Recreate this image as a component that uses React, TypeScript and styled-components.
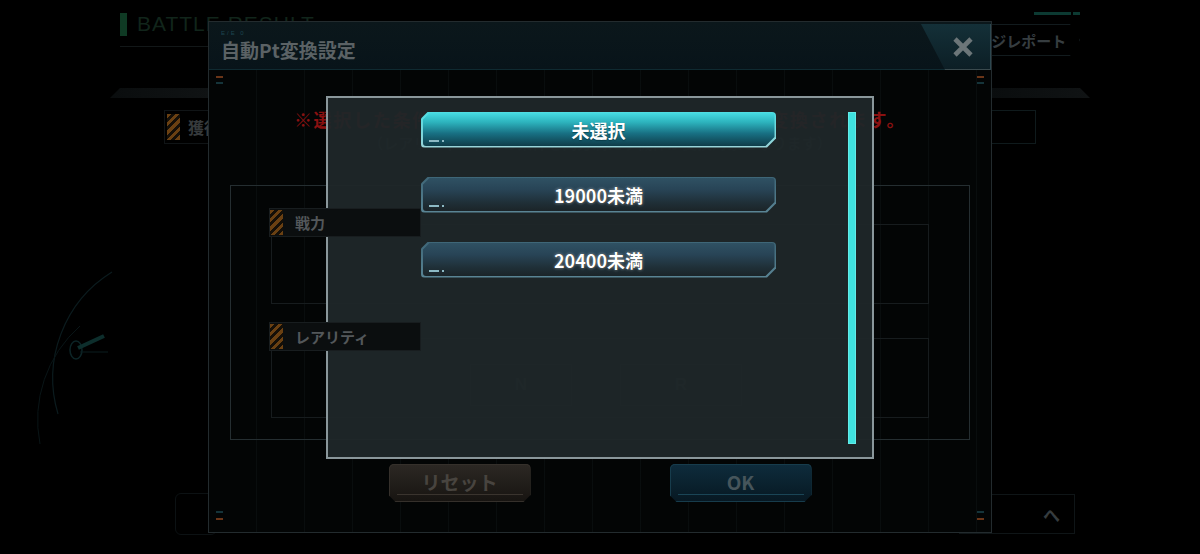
import React from 'react';
import styled, { createGlobalStyle } from 'styled-components';

const FONT = `"Noto Sans CJK JP", "Noto Sans", "Liberation Sans", sans-serif`;

const Global = createGlobalStyle`
  html, body {
    margin: 0;
    padding: 0;
    background: #000;
  }
  #root {
    width: 1200px;
    height: 554px;
  }
`;

const Stage = styled.div`
  position: relative;
  width: 1200px;
  height: 554px;
  overflow: hidden;
  background: #000;
  font-family: ${FONT};
`;

/* ---------- underlying battle result page (dimmed) ---------- */

const Page = styled.div`
  display: flex;
  flex-direction: column;
  height: 100%;
`;

const PageHeader = styled.div`
  display: flex;
  align-items: flex-start;
  height: 62px;
  padding: 12px 120px 0 120px;
  box-sizing: border-box;
`;

const TitleBlock = styled.div`
  display: flex;
  flex-direction: column;
  gap: 10px;
`;

const TitleRow = styled.div`
  display: flex;
  align-items: center;
  gap: 10px;
`;

const GreenBar = styled.div`
  width: 7px;
  height: 23px;
  background: #0f3a24;
`;

const PageTitle = styled.div`
  font-family: "Liberation Sans", sans-serif;
  font-size: 21px;
  letter-spacing: 1px;
  color: #11251b;
`;

const TitleRule = styled.div`
  width: 92px;
  height: 1px;
  background: #121718;
`;

const ReportColumn = styled.div`
  margin-left: auto;
  display: flex;
  flex-direction: column;
  align-items: flex-end;
  gap: 9px;
`;

const TealRule = styled.div`
  width: 46px;
  height: 3px;
  background: linear-gradient(90deg, #0c3a32 0 80%, transparent 80% 84%, #0c3a32 84%);
`;

const ReportButton = styled.div`
  width: 146px;
  height: 32px;
  display: flex;
  align-items: center;
  padding-left: 12px;
  box-sizing: border-box;
  font-size: 15px;
  font-weight: 700;
  color: #363d40;
  border: 1px solid #121b1e;
  clip-path: polygon(0 0, calc(100% - 10px) 0, 100% 50%, calc(100% - 10px) 100%, 0 100%);
`;

const PageBody = styled.div`
  flex: 1;
  display: grid;
  grid-template-columns: 210px 1fr 210px;
`;

const Side = styled.div<{ $right?: boolean }>`
  display: flex;
  flex-direction: column;
  align-items: ${p => (p.$right ? 'flex-start' : 'flex-end')};
  padding-top: 26px;
`;

const DecoStrip = styled.div<{ $flip?: boolean }>`
  width: 100px;
  height: 10px;
  background: linear-gradient(90deg, #0a0d0e, #101314);
  clip-path: ${p =>
    p.$flip
      ? 'polygon(0 0, 90% 0, 100% 100%, 0 100%)'
      : 'polygon(10% 0, 100% 0, 100% 100%, 0 100%)'};
`;

const SideTag = styled.div<{ $plain?: boolean }>`
  margin-top: 12px;
  display: flex;
  align-items: center;
  gap: 8px;
  width: 46px;
  height: 34px;
  padding-left: 2px;
  box-sizing: border-box;
  border: 1px solid ${p => (p.$plain ? '#0f1a1c' : '#101416')};
  border-${p => (p.$plain ? 'left' : 'right')}: none;
  font-size: 16px;
  font-weight: 700;
  color: #363a3c;
  white-space: nowrap;
`;

const Stripes = styled.div<{ $h?: number }>`
  flex: none;
  width: 13px;
  height: ${p => p.$h ?? 26}px;
  background: repeating-linear-gradient(135deg, #6a4012 0 3px, #140f08 3px 6px);
`;

const Gauge = styled.svg`
  margin-top: 120px;
  align-self: flex-start;
`;

const PageFooter = styled.div`
  display: flex;
  align-items: center;
  justify-content: space-between;
  height: 56px;
  padding: 0 125px 12px 175px;
`;

const FooterChip = styled.div`
  width: 40px;
  height: 40px;
  border: 1px solid #0c1113;
  border-radius: 6px;
`;

const NextButton = styled.div`
  width: 116px;
  height: 40px;
  display: flex;
  align-items: center;
  justify-content: flex-end;
  padding-right: 14px;
  box-sizing: border-box;
  border: 1px solid #0f1517;
  font-size: 17px;
  font-weight: 700;
  color: #363c3f;
`;

/* ---------- dialog layers ---------- */

const Layer = styled.div`
  position: absolute;
  inset: 0;
  display: flex;
  align-items: center;
  justify-content: center;
`;

const SettingsDialog = styled.div`
  position: relative;
  width: 784px;
  height: 512px;
  box-sizing: border-box;
  border: 1px solid #232b2e;
  display: flex;
  flex-direction: column;
  background:
    repeating-linear-gradient(90deg, transparent 0 47px, rgba(20, 28, 30, 0.35) 47px 48px),
    #030505;
`;

const DialogHeader = styled.div`
  display: flex;
  align-items: stretch;
  height: 47px;
  background: linear-gradient(180deg, #0b171b, #08141a);
  border-bottom: 1px solid #0f2a31;
`;

const HeaderTitle = styled.div`
  display: flex;
  flex-direction: column;
  justify-content: center;
  gap: 2px;
  padding-left: 12px;
`;

const Tiny = styled.div`
  font-family: "Liberation Sans", sans-serif;
  font-size: 6px;
  line-height: 7px;
  letter-spacing: 2px;
  color: #1c4550;
`;

const TitleText = styled.div`
  font-size: 19px;
  font-weight: 700;
  color: #5b6265;
  line-height: 22px;
`;

const CloseButton = styled.button`
  margin-left: auto;
  margin-top: 2px;
  width: 70px;
  height: 46px;
  border: none;
  padding: 0 0 0 14px;
  display: flex;
  align-items: center;
  justify-content: center;
  background: linear-gradient(180deg, #143038, #0c1e25);
  clip-path: polygon(0 0, 100% 0, 100% 100%, 24px 100%);
  box-shadow: inset -1px 0 0 #2d474f, inset 0 -1px 0 #3a4a4e;
`;

const DialogBody = styled.div`
  flex: 1;
  display: flex;
  flex-direction: column;
  align-items: center;
  padding: 37px 21px 0;
`;

const Notice = styled.div`
  font-size: 18px;
  font-weight: 700;
  letter-spacing: 1.7px;
  line-height: 24px;
  color: #8a1111;
  white-space: nowrap;
`;

const SubNotice = styled.div`
  font-size: 15px;
  font-weight: 700;
  line-height: 24px;
  color: #252b2d;
  white-space: nowrap;
`;

const FilterBox = styled.div`
  align-self: stretch;
  margin-top: 30px;
  height: 255px;
  box-sizing: border-box;
  border: 1px solid #252e31;
  padding: 22px 40px 0 38px;
  display: flex;
  flex-direction: column;
  gap: 18px;
`;

const FilterGroup = styled.div`
  display: flex;
  flex-direction: column;
`;

const GroupTag = styled.div`
  position: relative;
  z-index: 1;
  display: flex;
  align-items: center;
  gap: 12px;
  width: 150px;
  height: 27px;
  margin-bottom: -13px;
  background: #0b0e0f;
  border: 1px solid #181d1f;
  font-size: 15px;
  font-weight: 700;
  color: #53575a;
`;

const GroupBox = styled.div`
  height: 80px;
  margin-left: 2px;
  border: 1px solid #171c1e;
  display: flex;
  align-items: center;
  gap: 48px;
  padding: 14px 0 0 198px;
  box-sizing: border-box;
`;

const RarityChip = styled.div<{ $w: number }>`
  width: ${p => p.$w}px;
  height: 40px;
  border: 1px solid #1b2123;
  display: flex;
  align-items: center;
  justify-content: center;
  font-family: "Liberation Sans", sans-serif;
  font-size: 17px;
  font-weight: 700;
  color: #2a3032;
`;

const ButtonRow = styled.div`
  display: flex;
  gap: 139px;
  margin-top: 24px;
`;

const FooterButton = styled.button<{ $tone: 'brown' | 'blue' }>`
  position: relative;
  width: 142px;
  height: 38px;
  border: none;
  padding: 0 0 4px;
  font-family: ${FONT};
  font-size: 19px;
  font-weight: 700;
  border-radius: 5px 5px 0 0;
  clip-path: polygon(0 0, 100% 0, 100% calc(100% - 7px), calc(100% - 7px) 100%, 7px 100%, 0 calc(100% - 7px));
  color: ${p => (p.$tone === 'brown' ? '#48443f' : '#46555b')};
  background: ${p =>
    p.$tone === 'brown'
      ? 'linear-gradient(180deg, #2c2824, #171411)'
      : 'linear-gradient(180deg, #0e2c3c, #071822)'};
  box-shadow: inset 0 0 0 1px ${p => (p.$tone === 'brown' ? '#35302b' : '#173c4c')};

  &::after {
    content: '';
    position: absolute;
    left: 8px;
    right: 8px;
    bottom: 7px;
    height: 1px;
    background: ${p => (p.$tone === 'brown' ? '#3a342e' : '#1a4556')};
  }
`;

const Marker = styled.div<{ $x: 'left' | 'right'; $y: number; $c: string }>`
  position: absolute;
  ${p => p.$x}: 7px;
  top: ${p => p.$y}px;
  width: 7px;
  height: 2px;
  background: ${p => p.$c};
`;

/* ---------- selection popup ---------- */

const Picker = styled.div`
  width: 548px;
  height: 363px;
  box-sizing: border-box;
  border: 2px solid #8a979b;
  background: rgba(31, 39, 41, 0.95);
  display: flex;
  padding: 14px 16px 0 93px;
`;

const OptionList = styled.div`
  display: flex;
  flex-direction: column;
  gap: 29px;
`;

const CHAMFER = `polygon(7px 0, 100% 0, 100% calc(100% - 9px), calc(100% - 9px) 100%, 0 100%, 0 7px)`;

const OptionFrame = styled.button<{ $active?: boolean }>`
  width: 355px;
  height: 36px;
  padding: 1.5px;
  border: none;
  border-radius: 4px;
  clip-path: ${CHAMFER};
  background: ${p =>
    p.$active
      ? 'linear-gradient(180deg, #4fdde2, #9ad3d8)'
      : 'linear-gradient(180deg, #3e6677, #5a8595)'};
  cursor: pointer;
`;

const OptionFace = styled.span<{ $active?: boolean }>`
  position: relative;
  display: flex;
  align-items: center;
  justify-content: center;
  width: 100%;
  height: 100%;
  border-radius: 3px;
  clip-path: ${CHAMFER};
  font-family: ${FONT};
  font-size: 18px;
  font-weight: 700;
  color: #fff;
  background: ${p =>
    p.$active
      ? 'linear-gradient(180deg, #46dbe1 0%, #2db3bd 28%, #187083 62%, #0f3c49 100%)'
      : 'linear-gradient(180deg, #2f5163 0%, #284456 35%, #1f2f37 75%, #1b2428 100%)'};
  text-shadow: ${p =>
    p.$active
      ? '0 1px 1px rgba(0, 40, 50, 0.55)'
      : '0 0 1px #000, 0 0 3px rgba(255, 255, 255, 0.6)'};

  &::after {
    content: '';
    position: absolute;
    left: 6px;
    bottom: 4px;
    width: 16px;
    height: 2px;
    background:
      linear-gradient(90deg, #8db9c4 0 10px, transparent 10px 13px, #8db9c4 13px 15px, transparent 15px);
  }
`;

const Scrollbar = styled.div`
  margin-left: auto;
  width: 8px;
  height: 332px;
  background: #3fe2df;
  box-shadow: inset 0 0 0 1px #62ece9;
`;

const options = ['未選択', '19000未満', '20400未満'];

export default function App() {
  return (
    <Stage>
      <Global />
      <Page>
        <PageHeader>
          <TitleBlock>
            <TitleRow>
              <GreenBar />
              <PageTitle>BATTLE RESULT</PageTitle>
            </TitleRow>
            <TitleRule />
          </TitleBlock>
          <ReportColumn>
            <TealRule />
            <ReportButton>ダメージレポート</ReportButton>
          </ReportColumn>
        </PageHeader>
        <PageBody>
          <Side>
            <DecoStrip />
            <SideTag>
              <Stripes />
              獲得
            </SideTag>
            <Gauge width="210" height="200" viewBox="0 0 210 200">
              <path d="M112 8 A125 125 0 0 0 58 150" fill="none" stroke="#0b1b1e" strokeWidth="1.2" />
              <path d="M80 62 A125 125 0 0 0 40 180" fill="none" stroke="#091517" strokeWidth="1" />
              <ellipse cx="76" cy="86" rx="6" ry="9" fill="none" stroke="#0c2426" strokeWidth="1.5" />
              <path d="M78 84 L104 72" stroke="#0d2e2c" strokeWidth="4" />
              <path d="M80 88 L108 88" stroke="#0a1c1e" strokeWidth="1" />
            </Gauge>
          </Side>
          <div />
          <Side $right>
            <DecoStrip $flip />
            <SideTag $plain />
          </Side>
        </PageBody>
        <PageFooter>
          <FooterChip />
          <NextButton>へ</NextButton>
        </PageFooter>
      </Page>

      <Layer>
        <SettingsDialog>
          <DialogHeader>
            <HeaderTitle>
              <Tiny>E/E 0</Tiny>
              <TitleText>自動Pt変換設定</TitleText>
            </HeaderTitle>
            <CloseButton aria-label="close">
              <svg width="24" height="24" viewBox="0 0 24 24">
                <path d="M4 4 L20 20 M20 4 L4 20" stroke="#6c7679" strokeWidth="4.6" />
              </svg>
            </CloseButton>
          </DialogHeader>
          <DialogBody>
            <Notice>※選択した条件に一致する機体は出撃後に自動でPtへ変換されます。</Notice>
            <SubNotice>（レアリティ・戦力の条件を両方満たす機体が変換対象となります）</SubNotice>
            <FilterBox>
              <FilterGroup>
                <GroupTag>
                  <Stripes $h={25} />
                  戦力
                </GroupTag>
                <GroupBox />
              </FilterGroup>
              <FilterGroup>
                <GroupTag>
                  <Stripes $h={25} />
                  レアリティ
                </GroupTag>
                <GroupBox>
                  <RarityChip $w={100}>N</RarityChip>
                  <RarityChip $w={120}>R</RarityChip>
                </GroupBox>
              </FilterGroup>
            </FilterBox>
            <ButtonRow>
              <FooterButton $tone="brown">リセット</FooterButton>
              <FooterButton $tone="blue">OK</FooterButton>
            </ButtonRow>
          </DialogBody>
          <Marker $x="left" $y={54} $c="#6a3518" />
          <Marker $x="left" $y={60} $c="#15343a" />
          <Marker $x="right" $y={54} $c="#6a3518" />
          <Marker $x="right" $y={60} $c="#15343a" />
          <Marker $x="left" $y={489} $c="#15343a" />
          <Marker $x="left" $y={496} $c="#6a3518" />
          <Marker $x="right" $y={489} $c="#15343a" />
          <Marker $x="right" $y={496} $c="#6a3518" />
        </SettingsDialog>
      </Layer>

      <Layer>
        <Picker>
          <OptionList>
            {options.map((label, i) => (
              <OptionFrame key={label} $active={i === 0}>
                <OptionFace $active={i === 0}>{label}</OptionFace>
              </OptionFrame>
            ))}
          </OptionList>
          <Scrollbar />
        </Picker>
      </Layer>
    </Stage>
  );
}
